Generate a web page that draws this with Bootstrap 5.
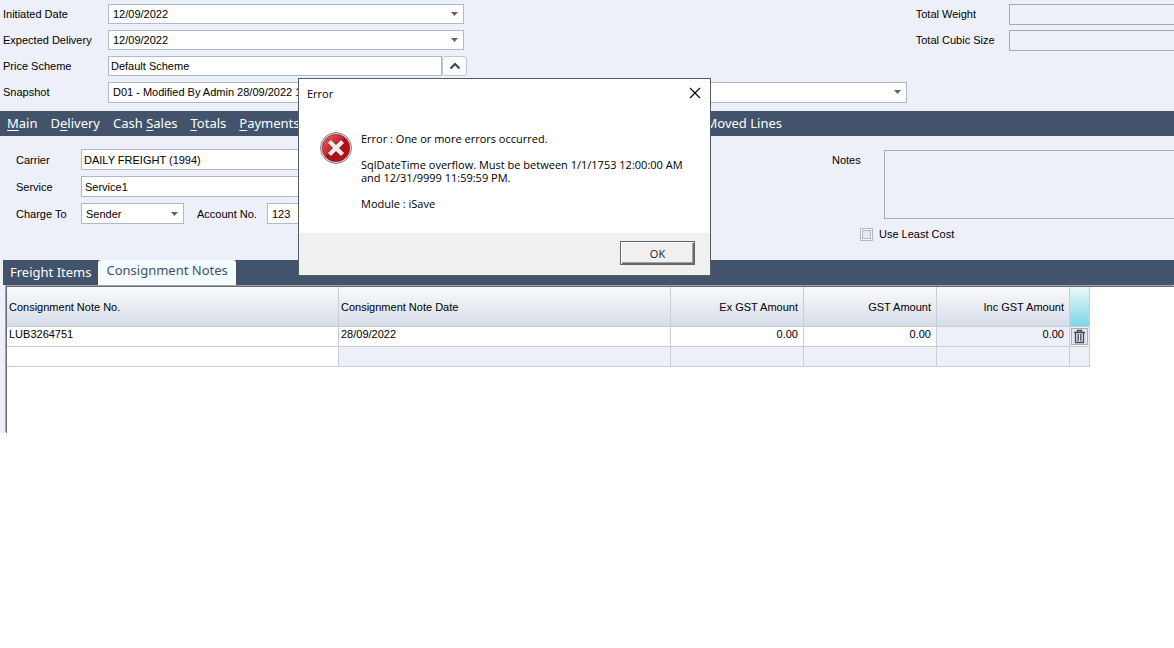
<!DOCTYPE html>
<html lang="en">
<head>
<meta charset="utf-8">
<meta name="viewport" content="width=device-width, initial-scale=1">
<title>Consignment Notes</title>
<link href="https://cdn.jsdelivr.net/npm/bootstrap@5.3.0/dist/css/bootstrap.min.css" rel="stylesheet">
<style>
  :root { --slate: #42536b; --pane: #edf0f8; --edge: #adb9d0; }
  body { font: 11px/16px "Liberation Sans", sans-serif; color: #000; background: #fff; overflow-x: hidden; }
  .app { background: var(--pane); }

  /* form fields */
  .fields { display: grid; grid-template-columns: auto 1fr; align-items: center; }
  .fields-top { grid-template-columns: 105px 1fr; grid-auto-rows: 20px; row-gap: 6px; padding: 4px 9px 9px 3px; flex: 0 0 78%; }
  .fields-totals { grid-template-columns: 93px 1fr; grid-auto-rows: 21px; row-gap: 5px; align-content: start; padding-top: 4px; }
  .fields-totals label { line-height: 20px; align-self: start; }
  .fields-carrier { grid-template-columns: 65px 1fr; grid-auto-rows: 21px; row-gap: 6px; padding: 13px 0 36px 16px; flex: 0 0 50%; }
  .form-control, .form-select {
    font: inherit; color: #000; height: 20px; min-height: 0; padding: 0 4px; border: 1px solid var(--edge);
    border-radius: 0; background-color: #fff;
  }
  .form-control { padding: 0 3px; }
  .form-select {
    padding-right: 16px; background-size: 7px 4px; background-position: right 5px center;
    background-image: url("data:image/svg+xml,%3Csvg xmlns='http://www.w3.org/2000/svg' viewBox='0 0 7 4'%3E%3Cpath d='M0 0h7L3.5 4z' fill='%23606468'/%3E%3C/svg%3E");
  }
  .fields-carrier .form-control, .fields-carrier .form-select, .tall { height: 21px; }
  .fields .lookup-text { padding-left: 2px; }
  .date-field { width: 356px; }
  .scheme-field { width: 334px; }
  .charge-field { flex: 0 0 103px; }
  .account-label { padding: 0 10px 0 13px; white-space: nowrap; }
  .to-edge, .to-edge:focus { background: var(--pane); border-color: #a5a9b7; border-right: 0; }
  .btn-lookup { width: 25px; height: 20px; padding: 0; line-height: 0; border: 1px solid #c3c7d2; border-radius: 3px; background: #fafbfd; }
  .notes-box { height: 69px; resize: none; }
  .notes-side { flex: 1; padding: 14px 0 0 245px; }
  .notes-label { flex: 0 0 52px; padding-top: 2px; }
  .least-row { margin: 7px 0 0 28px; gap: 6px; }
  .form-check-input[type=checkbox] { width: 13px; height: 13px; margin: 0; border: 1px solid var(--edge); border-radius: 0; background: #e6e8ea; box-shadow: inset 0 0 0 1px #f5f8fc, inset 0 0 0 2px #b4b8be; }

  /* bars */
  .menu-bar, .tab-bar { font: 13px/25px "Noto Sans", sans-serif; background: var(--slate); height: 25px; }
  .menu-bar { padding: 0 7px; gap: 13px; }
  .menu-bar a { color: #fff; text-decoration: none; white-space: nowrap; }
  .menu-bar u { text-underline-offset: 2px; }
  .menu-last { margin-left: 393px; }
  .tab-bar { margin-left: 3px; }
  .tab-bar button { font: inherit; border: 0; padding: 0 7px; height: 25px; background: none; color: #fff; white-space: nowrap; }
  .tab-bar button.active { background: #f5faff; color: var(--slate); line-height: 21px; border-radius: 3px 3px 0 0; padding: 0 8px 4px; }

  /* grid */
  .sheet { margin: 1px 0 0 6px; min-height: 147px; background: #fff; border: solid #696c72; border-width: 1px 0 0 1px; box-shadow: -1px -1px #a0a2a6; }
  .notes-grid { width: 1083px; table-layout: fixed; border-collapse: separate; border-spacing: 0; }
  .notes-grid th, .notes-grid td { border: solid #cbcdd2; border-width: 0 1px 1px 0; padding: 0 5px 0 2px; white-space: nowrap; }
  .notes-grid th { height: 40px; font-weight: 400; background: linear-gradient(#f9fafb, #e6eaf1 55%, #d5dce9); }
  .notes-grid th.tools { background: linear-gradient(#eaf8fb, #7fd6e4); }
  .notes-grid td { height: 20px; line-height: 14px; vertical-align: top; }
  .notes-grid td.locked { background: var(--pane); }
  .notes-grid td.tool-cell { padding: 1px; line-height: 0; }
  .btn-bin { width: 17px; height: 17px; padding: 0; border: 1px solid #a9adb5; border-radius: 0; background: #e4e7ec; line-height: 0; }

  /* message box */
  .message { position: absolute; left: 298px; top: 78px; width: 413px; background: #fff; border: 1px solid #545a66; font-family: "Open Sans", sans-serif; line-height: 13px; }
  .message header { padding: 8px 9px 0 8px; height: 53px; }
  .message-text { padding: 0 20px 23px 21px; gap: 9px; }
  .message-text p { margin: 0 0 13px; }
  .message footer { background: #f0f0f0; padding: 8px 15px 10px; height: 42px; }
  .btn-x { border: 0; padding: 0; background: none; line-height: 0; }
  .btn-ok { width: 75px; height: 24px; border: 1px solid #666; border-radius: 0; background: #f0f0f0; padding: 0; font: inherit; box-shadow: inset 1px 1px #fff, inset -1px -1px #696969, inset -2px -2px #a0a0a0; }
</style>
</head>
<body>
<main class="app">
  <form class="d-flex">
    <div class="fields fields-top">
      <label for="initiated">Initiated Date</label>
      <select id="initiated" class="form-select date-field"><option>12/09/2022</option></select>
      <label for="expected">Expected Delivery</label>
      <select id="expected" class="form-select date-field"><option>12/09/2022</option></select>
      <label for="scheme">Price Scheme</label>
      <div class="d-flex">
        <input id="scheme" class="form-control lookup-text scheme-field" value="Default Scheme">
        <button type="button" class="btn btn-lookup" aria-label="Price Scheme"><svg width="12" height="8" viewBox="0 0 12 8"><path d="M1.500 6.500 6 2l4.500 4.500" fill="none" stroke="#3a4250" stroke-width="2"/></svg></button>
      </div>
      <label for="snapshot">Snapshot</label>
      <select id="snapshot" class="form-select tall"><option>D01 - Modified By Admin 28/09/2022 1</option></select>
    </div>
    <div class="fields fields-totals flex-grow-1">
      <label for="weight">Total Weight</label>
      <input id="weight" class="form-control tall to-edge">
      <label for="cubic">Total Cubic Size</label>
      <input id="cubic" class="form-control tall to-edge">
    </div>
  </form>

  <nav class="menu-bar d-flex">
    <a href="#"><u>M</u>ain</a>
    <a href="#">D<u>e</u>livery</a>
    <a href="#">Cash <u>S</u>ales</a>
    <a href="#"><u>T</u>otals</a>
    <a href="#"><u>P</u>ayments</a>
    <a href="#" class="menu-last">Moved Lines</a>
  </nav>

  <form class="d-flex">
    <div class="fields fields-carrier">
      <label for="carrier">Carrier</label>
      <input id="carrier" class="form-control lookup-text" value="DAILY FREIGHT (1994)">
      <label for="service">Service</label>
      <input id="service" class="form-control" value="Service1">
      <label for="charge">Charge To</label>
      <div class="d-flex align-items-center">
        <select id="charge" class="form-select charge-field"><option>Sender</option></select>
        <label for="account" class="account-label">Account No.</label>
        <input id="account" class="form-control ps-1" value="123">
      </div>
    </div>
    <div class="notes-side">
      <div class="d-flex">
        <label for="notes" class="notes-label">Notes</label>
        <textarea id="notes" class="form-control notes-box to-edge"></textarea>
      </div>
      <div class="d-flex align-items-center least-row">
        <input type="checkbox" id="least" class="form-check-input">
        <label for="least">Use Least Cost</label>
      </div>
    </div>
  </form>

  <div class="tab-bar d-flex" role="tablist">
    <button type="button" role="tab">Freight Items</button>
    <button type="button" role="tab" class="active" aria-selected="true">Consignment Notes</button>
  </div>

  <section class="sheet">
    <table class="notes-grid">
      <colgroup><col style="width:332px"><col style="width:332px"><col style="width:133px"><col style="width:133px"><col style="width:133px"><col style="width:20px"></colgroup>
      <thead>
        <tr><th>Consignment Note No.</th><th>Consignment Note Date</th><th class="text-end">Ex GST Amount</th><th class="text-end">GST Amount</th><th class="text-end">Inc GST Amount</th><th class="tools"></th></tr>
      </thead>
      <tbody>
        <tr><td>LUB3264751</td><td>28/09/2022</td><td class="text-end">0.00</td><td class="text-end">0.00</td><td class="text-end locked">0.00</td>
          <td class="locked tool-cell"><button type="button" class="btn btn-bin" aria-label="Delete"><svg width="13" height="15" viewBox="0 0 13 15"><path d="M1 3.500h11M4.500 3V1.500h4V3M2.500 4v9.500h8V4M5.200 5v7M7.800 5v7" fill="none" stroke="#3c4a60" stroke-width="1.300"/></svg></button></td></tr>
        <tr><td></td><td class="locked"></td><td class="locked"></td><td class="locked"></td><td class="locked"></td><td class="locked"></td></tr>
      </tbody>
    </table>
  </section>
</main>

<div class="message" role="alertdialog" aria-labelledby="message-title">
  <header class="d-flex justify-content-between align-items-start">
    <span id="message-title">Error</span>
    <button type="button" class="btn-x" aria-label="Close"><svg width="12" height="12" viewBox="0 0 12 12"><path d="M1 1l10 10M11 1 1 11" stroke="#000" stroke-width="1.100"/></svg></button>
  </header>
  <div class="message-text d-flex">
    <svg class="flex-shrink-0" width="32" height="32" viewBox="0 0 32 32" aria-hidden="true">
      <defs><linearGradient id="red" x1="0" y1="0" x2="1" y2="1"><stop offset="0" stop-color="#e06a6a"/><stop offset=".45" stop-color="#c8242c"/><stop offset=".5" stop-color="#b00c14"/><stop offset="1" stop-color="#b8141c"/></linearGradient></defs>
      <circle cx="16" cy="16" r="15.500" fill="#e4e4e4" stroke="#858585"/>
      <circle cx="16" cy="16" r="13.800" fill="url(#red)" stroke="#8c1a20" stroke-width=".6"/>
      <path d="M10 10l12 12M22 10 10 22" stroke="#7d1015" stroke-width="5.600"/>
      <path d="M9.500 9.500l13 13M22.500 9.500l-13 13" stroke="#f1eded" stroke-width="4.400"/>
    </svg>
    <div>
      <p>Error : One or more errors occurred.</p>
      <p>SqlDateTime overflow. Must be between 1/1/1753 12:00:00 AM<br>and 12/31/9999 11:59:59 PM.</p>
      <p class="mb-0">Module : iSave</p>
    </div>
  </div>
  <footer class="d-flex justify-content-end"><button type="button" class="btn btn-ok">OK</button></footer>
</div>
<script src="https://cdn.jsdelivr.net/npm/bootstrap@5.3.0/dist/js/bootstrap.bundle.min.js"></script>
</body>
</html>
